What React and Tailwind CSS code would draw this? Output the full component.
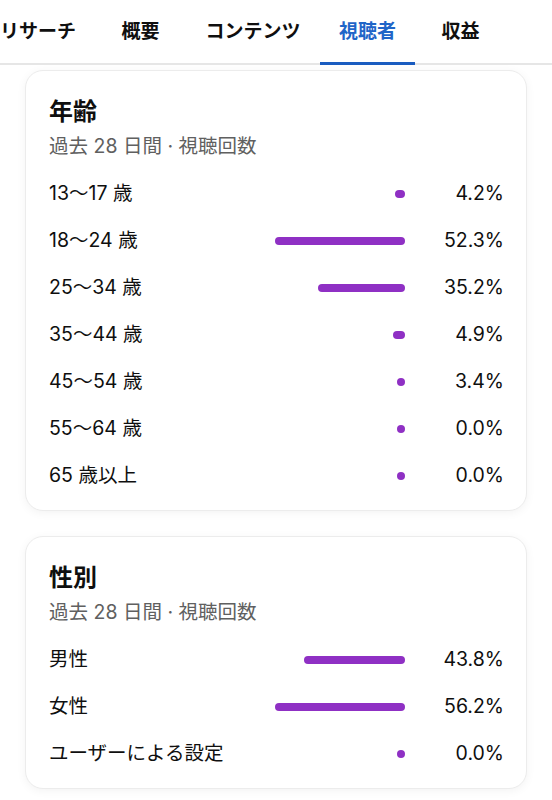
import React from 'react';

const tabs = [
    { label: 'リサーチ', w: 'w-[114px]' },
    { label: '概要', w: 'w-[91px]' },
    { label: 'コンテンツ', w: 'w-[134px]' },
    { label: '視聴者', w: 'w-[95px]', active: true },
    { label: '収益', w: 'w-[91px]' },
];

const ageRows = [
    { label: '13〜17 歳', value: 4.2 },
    { label: '18〜24 歳', value: 52.3 },
    { label: '25〜34 歳', value: 35.2 },
    { label: '35〜44 歳', value: 4.9 },
    { label: '45〜54 歳', value: 3.4 },
    { label: '55〜64 歳', value: 0.0 },
    { label: '65 歳以上', value: 0.0 },
];

const genderRows = [
    { label: '男性', value: 43.8 },
    { label: '女性', value: 56.2 },
    { label: 'ユーザーによる設定', value: 0.0 },
];

const StatRow = ({ label, value, max }) => {
    // bar length relative to the largest value in the card, min dot size
    const width = Math.max((value / max) * 130, 8);
    return (
        <div className="flex items-center h-[47px]">
            <div className="flex-1 text-[19.5px] text-[#0f0f0f]">{label}</div>
            <div className="flex justify-end items-center">
                <div className="h-[8px] rounded-full bg-[#8f30c4]" style={{ width: `${width}px` }} />
            </div>
            <div className="w-[99px] text-right text-[19.5px] text-[#0f0f0f]">{value.toFixed(1)}%</div>
        </div>
    );
};

const StatCard = ({ title, rows }) => {
    const max = Math.max(...rows.map(r => r.value));
    return (
        <div className="bg-white rounded-[18px] border border-[#ececec] shadow-[0_2px_10px_rgba(0,0,0,0.05)] pl-[23px] pr-[22px] pt-[25px] pb-[11px]">
            <h2 className="text-[24px] font-bold leading-[32px] text-[#0f0f0f]">{title}</h2>
            <p className="mt-[5px] text-[19.5px] leading-[26px] text-[#606060]">過去 28 日間 · 視聴回数</p>
            <div className="mt-[11px]">
                {rows.map(row => (
                    <StatRow key={row.label} label={row.label} value={row.value} max={max} />
                ))}
            </div>
        </div>
    );
};

export default function App() {
    return (
        <div className="w-[552px] min-h-screen bg-white overflow-hidden font-['Inter','Noto_Sans_CJK_JP',sans-serif]">
            <div className="h-[65px] border-b-2 border-[#e6e6e6] flex -ml-[19px]">
                {tabs.map(tab => (
                    <div key={tab.label} className={`relative shrink-0 ${tab.w} flex items-center justify-center pt-[2px] text-[19px] font-semibold ${tab.active ? 'text-[#1f65c8]' : 'text-[#0f0f0f]'}`}>
                        {tab.label}
                        {tab.active && <span className="absolute left-0 right-0 bottom-[-2px] h-[3px] bg-[#1a5cc0]" />}
                    </div>
                ))}
            </div>
            <div className="px-[25px] pt-[5px] flex flex-col gap-[25px]">
                <StatCard title="年齢" rows={ageRows} />
                <StatCard title="性別" rows={genderRows} />
            </div>
        </div>
    );
}
